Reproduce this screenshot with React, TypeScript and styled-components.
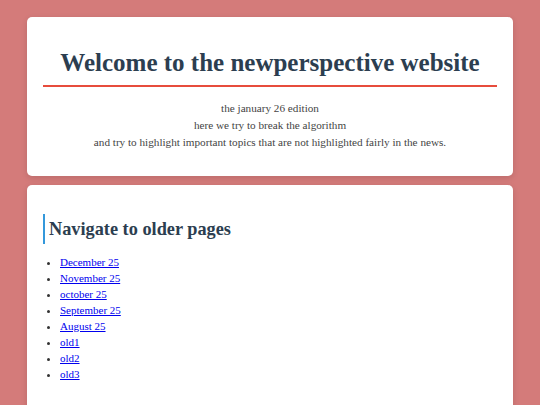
import React from "react";
import styled, { createGlobalStyle } from "styled-components";

const GlobalStyle = createGlobalStyle`
  html, body {
    margin: 0;
    padding: 0;
    background: #d47b7a;
  }
  body {
    font-family: "Liberation Serif", Georgia, serif;
    color: #333;
  }
`;

const Page = styled.main`
  display: flex;
  flex-direction: column;
  gap: 9px;
  padding: 17px 27px;
`;

const Card = styled.section`
  background: #ffffff;
  border-radius: 5px;
  padding: 16px;
  box-shadow: 0 2px 6px rgba(0, 0, 0, 0.12);
`;

const Title = styled.h1`
  margin: 16px 0 13px;
  padding-bottom: 8px;
  border-bottom: 2px solid #e74c3c;
  text-align: center;
  font-size: 25px;
  line-height: 28px;
  font-weight: 700;
  color: #2c3e50;
`;

const Intro = styled.p`
  margin: 0 0 9px;
  text-align: center;
  font-size: 11.2px;
  line-height: 17px;
  color: #444;
`;

const SectionTitle = styled.h2`
  margin: 13px 0 10px;
  padding: 4px 0 4px 4px;
  border-left: 2px solid #3498db;
  font-size: 18.3px;
  line-height: 22px;
  font-weight: 700;
  color: #2c3e50;
`;

const LinkList = styled.ul`
  margin: 0 0 20px;
  padding-left: 17px;
  font-size: 11px;
  line-height: 16px;
`;

const LinkItem = styled.li`
  color: #333;
`;

const PageLink = styled.a`
  color: #0000ee;
`;

const older = [
  "December 25",
  "November 25",
  "october 25",
  "September 25",
  "August 25",
  "old1",
  "old2",
  "old3",
];

export default function App() {
  return (
    <>
      <GlobalStyle />
      <Page>
        <Card>
          <Title>Welcome to the newperspective website</Title>
          <Intro>
            the january 26 edition
            <br />
            here we try to break the algorithm
            <br />
            and try to highlight important topics that are not highlighted fairly in the news.
          </Intro>
        </Card>
        <Card>
          <SectionTitle>Navigate to older pages</SectionTitle>
          <LinkList>
            {older.map((name) => (
              <LinkItem key={name}>
                <PageLink href="#">{name}</PageLink>
              </LinkItem>
            ))}
          </LinkList>
        </Card>
      </Page>
    </>
  );
}
